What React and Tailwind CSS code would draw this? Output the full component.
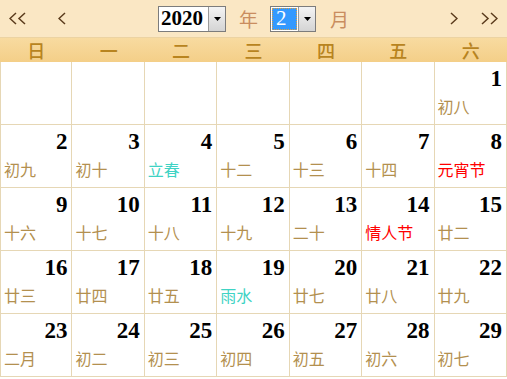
import React from "react";

const WEEK = ["日", "一", "二", "三", "四", "五", "六"];

const DAYS = [
  [1, "初八"],
  [2, "初九"],
  [3, "初十"],
  [4, "立春", "term"],
  [5, "十二"],
  [6, "十三"],
  [7, "十四"],
  [8, "元宵节", "fest"],
  [9, "十六"],
  [10, "十七"],
  [11, "十八"],
  [12, "十九"],
  [13, "二十"],
  [14, "情人节", "fest"],
  [15, "廿二"],
  [16, "廿三"],
  [17, "廿四"],
  [18, "廿五"],
  [19, "雨水", "term"],
  [20, "廿七"],
  [21, "廿八"],
  [22, "廿九"],
  [23, "二月"],
  [24, "初二"],
  [25, "初三"],
  [26, "初四"],
  [27, "初五"],
  [28, "初六"],
  [29, "初七"],
];

// chevron arrows of the nav bar, count = 1 or 2, dir = "l" | "r"
function Chevrons({ count, dir }) {
  const w = count === 2 ? 17 : 8;
  const pts = [];
  for (let i = 0; i < count; i++) {
    const x = i * 9;
    pts.push(dir === "l" ? `${x + 7},1 ${x + 1},6.5 ${x + 7},12` : `${x + 1},1 ${x + 7},6.5 ${x + 1},12`);
  }
  return (
    <svg width={w} height="13" viewBox={`0 0 ${w} 13`}>
      {pts.map((p) => (
        <polyline key={p} points={p} fill="none" stroke="#5a3b1c" strokeWidth="1.5" />
      ))}
    </svg>
  );
}

function DropButton() {
  return (
    <div className="flex h-full w-[17px] items-center justify-center border-l border-[#9a9a9a] bg-gradient-to-b from-[#f4f4f4] to-[#d4d4d4]">
      <svg width="7" height="4" viewBox="0 0 7 4">
        <path d="M0 0h7L3.5 4z" fill="#000" />
      </svg>
    </div>
  );
}

function Cell({ day, lunar, kind, first }) {
  let color = "text-[#b3904f]";
  if (kind === "fest") color = "text-[#ff0000]";
  if (kind === "term") color = "text-[#3fd3c4]";

  return (
    <div
      className={
        "flex h-[63px] flex-col border-b border-r border-[#e6d7b5] " +
        (first ? "border-l" : "")
      }
    >
      {day && (
        <>
          <div className="pr-[4px] pt-[5px] text-right font-['Liberation_Serif',serif] text-[23px] font-bold leading-none text-black">
            {day}
          </div>
          <div
            className={
              "mt-[8px] pl-[3px] font-['Noto_Sans_CJK_SC',sans-serif] text-[16px] leading-none " +
              color
            }
          >
            {lunar}
          </div>
        </>
      )}
    </div>
  );
}

export default function App() {
  const cells = [];
  for (let i = 0; i < 6; i++) cells.push(null);
  DAYS.forEach((d) => cells.push(d));

  return (
    <div className="h-[379px] w-[507px] overflow-hidden bg-white font-['Noto_Sans_CJK_SC',sans-serif]">
      {/* top bar */}
      <div className="flex h-[38px] items-center border-b border-[#ecd3a2] bg-[#fae7c4]">
        <div className="ml-[9px] flex w-[49px]">
          <Chevrons count={2} dir="l" />
        </div>
        <div className="flex w-[100px]">
          <Chevrons count={1} dir="l" />
        </div>

        <div className="flex h-[26px] w-[68px] items-center border border-[#7c7c7c] bg-white">
          <span className="flex-1 pl-[2px] font-['Liberation_Serif',serif] text-[21px] font-bold leading-none text-black">
            2020
          </span>
          <DropButton />
        </div>
        <span className="ml-[13px] text-[19px] leading-none text-[#c98d5f]">年</span>
        <div className="ml-[12px] flex h-[26px] w-[46px] items-center border border-[#7c7c7c] bg-white">
          <div className="m-[1px] flex h-[22px] flex-1 items-center border border-dotted border-[#e0a040] bg-[#3399ff] pl-[3px]">
            <span className="font-['Liberation_Serif',serif] text-[21px] leading-none text-white">2</span>
          </div>
          <DropButton />
        </div>
        <span className="ml-[14px] text-[19px] leading-none text-[#c98d5f]">月</span>

        <div className="ml-auto flex w-[31px]">
          <Chevrons count={1} dir="r" />
        </div>
        <div className="mr-[9px] flex">
          <Chevrons count={2} dir="r" />
        </div>
      </div>

      {/* week header */}
      <div className="grid h-[24px] grid-cols-7 bg-gradient-to-b from-[#f8dba0] to-[#f4cf88]">
        {WEEK.map((w) => (
          <div
            key={w}
            className="flex items-center justify-center text-[18px] font-medium leading-none text-[#b8841f]"
          >
            {w}
          </div>
        ))}
      </div>

      {/* days */}
      <div className="grid grid-cols-7">
        {cells.map((c, i) => (
          <Cell
            key={i}
            first={i % 7 === 0}
            day={c ? c[0] : null}
            lunar={c ? c[1] : null}
            kind={c ? c[2] : null}
          />
        ))}
      </div>
    </div>
  );
}
